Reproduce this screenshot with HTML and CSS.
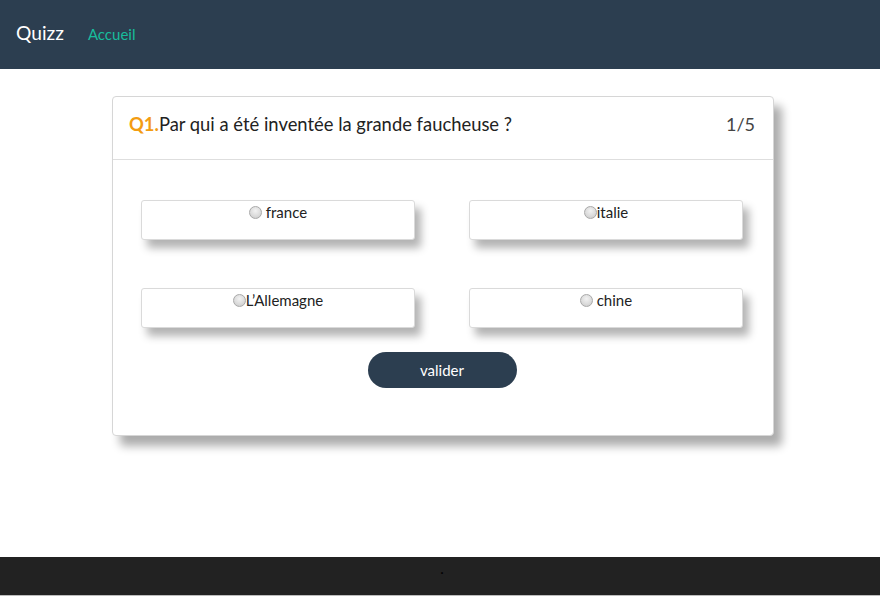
FILE: index.html
```html
<!DOCTYPE html>
<html lang="fr">
<head>
<meta charset="utf-8">
<title>Quizz</title>
<link rel="stylesheet" href="styles.css">
</head>
<body>
<header class="navbar">
  <span class="brand">Quizz</span>
  <a class="nav-link" href="#">Accueil</a>
</header>
<main class="main">
  <section class="card">
    <div class="card-header">
      <h2 class="question"><span class="qnum">Q1.</span>Par qui a été inventée la grande faucheuse ?</h2>
      <span class="count">1/5</span>
    </div>
    <div class="card-body">
      <div class="options">
        <label class="option"><span class="radio"></span> france</label>
        <label class="option"><span class="radio"></span>italie</label>
        <label class="option"><span class="radio"></span>L’Allemagne</label>
        <label class="option"><span class="radio"></span> chine</label>
      </div>
      <div class="actions">
        <button class="btn" type="button">valider</button>
      </div>
    </div>
  </section>
</main>
<footer class="footer"><span class="dot">.</span></footer>
</body>
</html>
```
FILE: styles.css
```css
* { box-sizing: border-box; }
html, body { margin: 0; padding: 0; }
body {
  font-family: Lato, "Open Sans", sans-serif;
  color: #222;
  background: #fff;
  height: 596px;
  display: flex;
  flex-direction: column;
}
.navbar {
  height: 69px;
  background: #2c3e50;
  display: flex;
  align-items: center;
  padding: 0 16px 3px;
  gap: 24px;
  flex-shrink: 0;
}
.brand {
  color: #fff;
  font-size: 19.2px;
  line-height: 24px;
}
.nav-link {
  color: #18bc9c;
  font-size: 15px;
  text-decoration: none;
  padding-top: 1px;
}
.main {
  flex: 1;
  display: flex;
  justify-content: center;
  padding-top: 27px;
}
.card {
  width: 662px;
  height: 340px;
  margin-left: 6px;
  border: 1px solid #d6d6d6;
  border-radius: 4px;
  background: #fff;
  box-shadow: 8px 10px 10px rgba(0, 0, 0, 0.33);
}
.card-header {
  height: 63px;
  border-bottom: 1px solid #dedede;
  display: flex;
  align-items: center;
  justify-content: space-between;
  padding: 0 18px 8px 16px;
}
.question {
  margin: 0;
  font-weight: 400;
  font-size: 18.4px;
  line-height: 22px;
  color: #222;
}
.qnum {
  color: #f39c12;
  font-weight: 700;
}
.count {
  font-size: 18px;
  color: #444;
}
.card-body {
  padding: 40px 32px 0 28px;
}
.options {
  display: grid;
  grid-template-columns: 274px 274px;
  column-gap: 54px;
  row-gap: 48px;
}
.option {
  height: 40px;
  border: 1px solid #dadada;
  border-radius: 3px;
  background: #fff;
  box-shadow: 6px 8px 8px rgba(0, 0, 0, 0.3);
  text-align: center;
  font-size: 15px;
  line-height: 22px;
  color: #222;
  padding-top: 0;
  white-space: pre;
}
.radio {
  display: inline-block;
  width: 13px;
  height: 13px;
  border-radius: 50%;
  border: 1px solid #a9a9a9;
  background: radial-gradient(circle at 50% 35%, #f2f2f2 0%, #dcdcdc 55%, #c8c8c8 100%);
  vertical-align: -1px;
}
.actions {
  display: flex;
  justify-content: center;
  padding-top: 24px;
  padding-left: 2px;
}
.btn {
  width: 149px;
  height: 36px;
  border: none;
  border-radius: 18px;
  background: #2c3e50;
  color: #fff;
  font-family: Lato, "Open Sans", sans-serif;
  font-size: 15px;
  cursor: pointer;
}
.footer {
  height: 39px;
  background: #222;
  flex-shrink: 0;
  display: flex;
  justify-content: center;
  padding-top: 4px;
  padding-left: 4px;
  border-bottom: 1px solid #bdbdbd;
}
.dot {
  color: #000;
  font-size: 15px;
  line-height: 15px;
}
```
